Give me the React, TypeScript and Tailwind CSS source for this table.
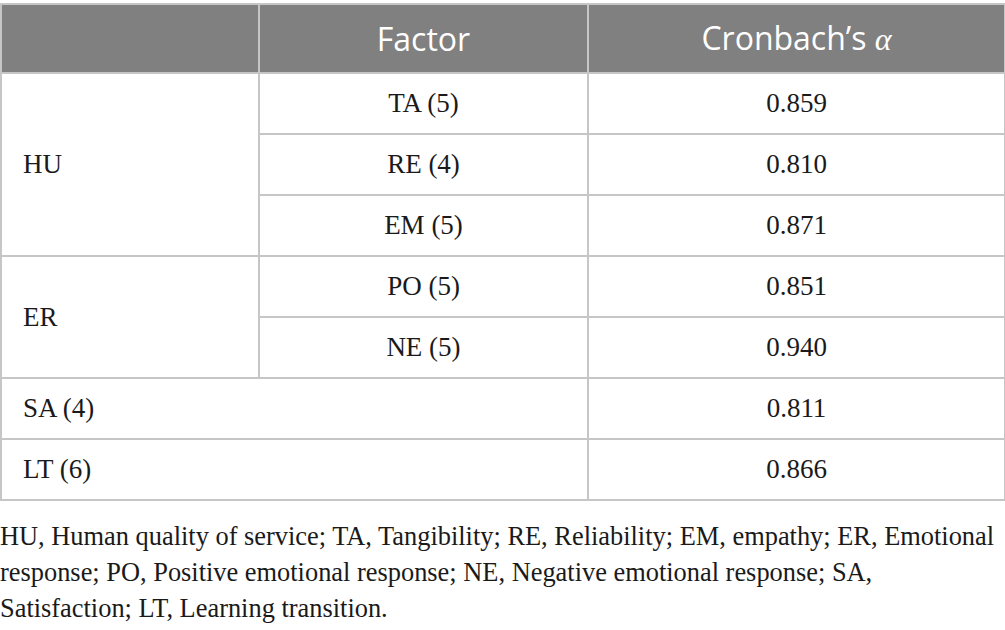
import React from 'react';

const rows = [
  { group: 'HU', factor: 'TA (5)', alpha: '0.859', span: 3 },
  { group: null, factor: 'RE (4)', alpha: '0.810' },
  { group: null, factor: 'EM (5)', alpha: '0.871' },
  { group: 'ER', factor: 'PO (5)', alpha: '0.851', span: 2 },
  { group: null, factor: 'NE (5)', alpha: '0.940' },
];

const App: React.FC = () => {
  const cell = 'border-2 border-[#c6c6c6] h-[61px] text-[27px] text-[#1a1a1a]';
  return (
    <div className="w-[1005px] h-[630px] bg-white pt-[3px]" style={{ fontFamily: '"Liberation Serif", serif' }}>
      <table className="w-[1004px] border-collapse table-fixed">
        <colgroup>
          <col className="w-[258px]" />
          <col className="w-[329px]" />
          <col className="w-[417px]" />
        </colgroup>
        <thead>
          <tr className="bg-[#808080] h-[69px]">
            <th className="border-2 border-[#c6c6c6]" />
            <th
              className="border-2 border-[#c6c6c6] text-white font-normal text-[32px]"
              style={{ fontFamily: '"Open Sans", sans-serif' }}
            >
              Factor
            </th>
            <th
              className="border-2 border-[#c6c6c6] text-white font-normal text-[32px]"
              style={{ fontFamily: '"Open Sans", sans-serif' }}
            >
              Cronbach’s <span className="italic" style={{ fontFamily: '"Liberation Serif", serif' }}>α</span>
            </th>
          </tr>
        </thead>
        <tbody>
          {rows.map((r) => (
            <tr key={r.factor}>
              {r.group && (
                <td rowSpan={r.span} className={`${cell} pl-[21px] text-left`}>
                  {r.group}
                </td>
              )}
              <td className={`${cell} text-center`}>{r.factor}</td>
              <td className={`${cell} text-center`}>{r.alpha}</td>
            </tr>
          ))}
          <tr>
            <td colSpan={2} className={`${cell} pl-[21px] text-left`}>SA (4)</td>
            <td className={`${cell} text-center`}>0.811</td>
          </tr>
          <tr>
            <td colSpan={2} className={`${cell} pl-[21px] text-left`}>LT (6)</td>
            <td className={`${cell} text-center`}>0.866</td>
          </tr>
        </tbody>
      </table>
      <p className="mt-[17px] w-[1004px] text-[26.4px] leading-[36px] text-[#1a1a1a]">
        HU, Human quality of service; TA, Tangibility; RE, Reliability; EM, empathy; ER, Emotional response; PO,
        Positive emotional response; NE, Negative emotional response; SA, Satisfaction; LT, Learning transition.
      </p>
    </div>
  );
};

export default App;
